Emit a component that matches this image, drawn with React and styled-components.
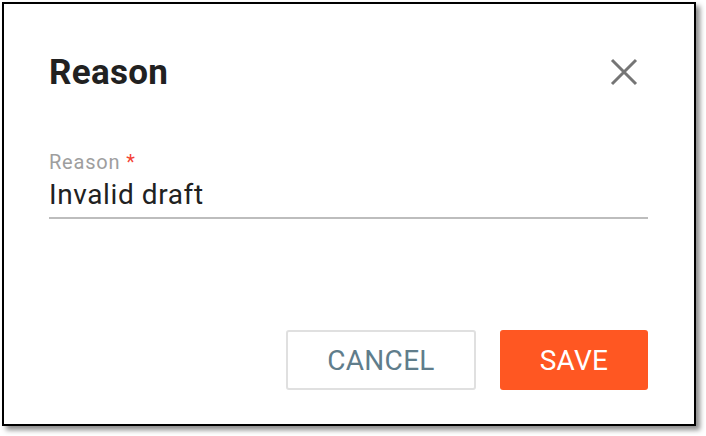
import React from "react";
import styled, { createGlobalStyle } from "styled-components";

const Global = createGlobalStyle`
  html, body { margin: 0; padding: 0; background: #fff; }
  body { font-family: Roboto, "Liberation Sans", sans-serif; }
`;

const Page = styled.div`
  padding: 2px;
  width: 706px;
  height: 436px;
  box-sizing: border-box;
`;

const Dialog = styled.div`
  width: 694px;
  height: 424px;
  box-sizing: border-box;
  border: 2px solid #000;
  background: #fff;
  box-shadow: 4px 4px 5px rgba(0, 0, 0, 0.45);
  padding: 0 46px 0 45px;
  display: flex;
  flex-direction: column;
`;

const Header = styled.div`
  display: flex;
  align-items: center;
  justify-content: space-between;
  height: 136px;
  padding-bottom: 10px;
  box-sizing: content-box;
`;

const Title = styled.h2`
  margin: 0;
  font-size: 35px;
  font-weight: 700;
  color: #212121;
  letter-spacing: 0.3px;
`;

const CloseButton = styled.button`
  border: 0;
  background: none;
  padding: 0;
  margin-right: 6px;
  width: 36px;
  height: 36px;
  display: flex;
  align-items: center;
  justify-content: center;
  cursor: pointer;
`;

const Field = styled.div`
  display: flex;
  flex-direction: column;
  border-bottom: 2px solid #bdbdbd;
`;

const Label = styled.label`
  font-size: 20px;
  color: #9e9e9e;
  line-height: 24px;
  letter-spacing: 0.8px;
  margin-bottom: 3px;
`;

const Required = styled.span`
  color: #f44336;
`;

const Value = styled.div`
  font-size: 28px;
  color: #212121;
  line-height: 36px;
  padding-bottom: 4px;
  letter-spacing: 0.6px;
`;

const Actions = styled.div`
  margin-top: auto;
  margin-bottom: 34px;
  display: flex;
  justify-content: flex-end;
  gap: 24px;
`;

const Button = styled.button`
  height: 60px;
  box-sizing: border-box;
  border-radius: 3px;
  font-family: Roboto, "Liberation Sans", sans-serif;
  font-size: 28px;
  font-weight: 400;
  letter-spacing: 0.3px;
  text-transform: uppercase;
  cursor: pointer;
  width: ${(p) => p.$width}px;
  border: ${(p) => (p.$primary ? "none" : "2px solid #e0e0e0")};
  background: ${(p) => (p.$primary ? "#ff5722" : "#fff")};
  color: ${(p) => (p.$primary ? "#fff" : "#607d8b")};
`;

export default function App() {
  return (
    <>
      <Global />
      <Page>
        <Dialog>
          <Header>
            <Title>Reason</Title>
            <CloseButton aria-label="close">
              <svg width="28" height="28" viewBox="0 0 28 28">
                <path d="M2 2 L26 26 M26 2 L2 26" stroke="#757575" strokeWidth="3" fill="none" />
              </svg>
            </CloseButton>
          </Header>
          <Field>
            <Label>
              Reason <Required>*</Required>
            </Label>
            <Value>Invalid draft</Value>
          </Field>
          <Actions>
            <Button $width={190}>Cancel</Button>
            <Button $primary $width={148}>Save</Button>
          </Actions>
        </Dialog>
      </Page>
    </>
  );
}
